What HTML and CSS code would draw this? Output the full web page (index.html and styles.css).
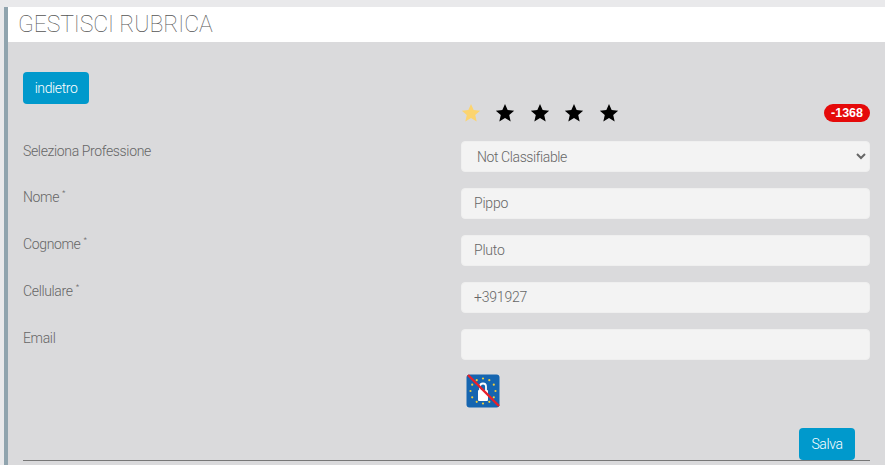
FILE: index.html
```html
<!DOCTYPE html>
<html lang="it">
<head>
<meta charset="utf-8">
<title>Gestisci Rubrica</title>
<link rel="stylesheet" href="styles.css">
</head>
<body>
<div class="panel">
  <header class="title-bar"><h1 class="title">GESTISCI RUBRICA</h1></header>
  <main class="content">
    <div class="back-row"><button class="btn back-btn" type="button">indietro</button></div>
    <div class="rating-row">
      <div class="stars">
        <svg class="star star-on" viewBox="0 0 24 24"><path d="M12 2.200l2.900 6.600 7.100.7-5.400 4.700 1.600 7-6.200-3.700-6.200 3.700 1.600-7L2 9.500l7.100-.7z"/></svg>
        <svg class="star" viewBox="0 0 24 24"><path d="M12 2.200l2.900 6.600 7.100.7-5.400 4.700 1.600 7-6.200-3.700-6.200 3.700 1.600-7L2 9.500l7.100-.7z"/></svg>
        <svg class="star" viewBox="0 0 24 24"><path d="M12 2.200l2.900 6.600 7.100.7-5.400 4.700 1.600 7-6.200-3.700-6.200 3.700 1.600-7L2 9.500l7.100-.7z"/></svg>
        <svg class="star" viewBox="0 0 24 24"><path d="M12 2.200l2.900 6.600 7.100.7-5.400 4.700 1.600 7-6.200-3.700-6.200 3.700 1.600-7L2 9.500l7.100-.7z"/></svg>
        <svg class="star" viewBox="0 0 24 24"><path d="M12 2.200l2.900 6.600 7.100.7-5.400 4.700 1.600 7-6.200-3.700-6.200 3.700 1.600-7L2 9.500l7.100-.7z"/></svg>
      </div>
      <span class="badge">-1368</span>
    </div>
    <form class="form">
      <label class="label label-first">Seleziona Professione</label>
      <select class="field select"><option>Not Classifiable</option></select>
      <label class="label">Nome<sup class="req">*</sup></label>
      <input class="field" type="text" value="Pippo">
      <label class="label">Cognome<sup class="req">*</sup></label>
      <input class="field" type="text" value="Pluto">
      <label class="label">Cellulare<sup class="req">*</sup></label>
      <input class="field" type="text" value="+391927">
      <label class="label">Email</label>
      <input class="field" type="text" value="">
      <span></span>
      <svg class="privacy" viewBox="0 0 34 34">
        <rect x="0.500" y="0.500" width="33" height="33" rx="3" fill="#1565b0"/>
        <g fill="#f2cf3c">
          <circle cx="17" cy="4.500" r="1.100"/><circle cx="23.300" cy="6.200" r="1.100"/><circle cx="27.800" cy="10.700" r="1.100"/>
          <circle cx="29.500" cy="17" r="1.100"/><circle cx="27.800" cy="23.300" r="1.100"/><circle cx="23.300" cy="27.800" r="1.100"/>
          <circle cx="17" cy="29.500" r="1.100"/><circle cx="10.700" cy="27.800" r="1.100"/><circle cx="6.200" cy="23.300" r="1.100"/>
          <circle cx="4.500" cy="17" r="1.100"/><circle cx="6.200" cy="10.700" r="1.100"/><circle cx="10.700" cy="6.200" r="1.100"/>
        </g>
        <path d="M14 16v-3.500a3 3 0 0 1 6 0V16" fill="none" stroke="#fff" stroke-width="1.800"/>
        <rect x="12" y="16" width="10" height="11" rx="1" fill="#fff"/>
        <path d="M2 1L33 32" stroke="#e8202a" stroke-width="2.400"/>
      </svg>
    </form>
    <div class="actions"><button class="btn save-btn" type="button">Salva</button></div>
    <hr class="rule">
  </main>
</div>
</body>
</html>
```
FILE: styles.css
```css
* { box-sizing: border-box; }
html, body { margin: 0; height: 100%; overflow: hidden; }
body {
  background: #e9e9eb;
  padding: 7px 0 0 4px;
  font-family: "Roboto", "Liberation Sans", sans-serif;
  font-weight: 300;
  color: #666;
}
.panel {
  border-left: 4px solid #90a4ae;
  background: #dadadc;
  height: 458px;
  display: flex;
  flex-direction: column;
}
.title-bar { background: #fff; height: 35px; padding: 0 10px; flex: none; }
.title { margin: 0; font-size: 23px; font-weight: 100; line-height: 36px; color: #555; letter-spacing: -0.1px; }
.content { padding: 30px 15px 0 15px; flex: 1; }
.back-row { height: 32px; }
.btn {
  height: 32px;
  background: #0099cc;
  color: #fff;
  border: 0;
  border-radius: 4px;
  font: 300 14px "Roboto", "Liberation Sans", sans-serif;
  letter-spacing: -0.4px;
  padding: 0;
}
.back-btn { width: 66px; }
.save-btn { width: 56px; }
.rating-row {
  margin-left: 438px;
  height: 37px;
  display: flex;
  justify-content: space-between;
  align-items: flex-start;
}
.stars { display: flex; gap: 12.500px; margin: -2px 0 0 -1.500px; }
.star { width: 22px; height: 22px; fill: #000; }
.star-on { fill: #fcd46f; }
.badge {
  background: #e50a0a;
  color: #fff;
  font: 700 12.500px "Liberation Sans", sans-serif;
  line-height: 18px;
  height: 18px;
  border-radius: 9px;
  padding: 0 7px;
}
.form {
  display: grid;
  grid-template-columns: 438px 409px;
  grid-auto-rows: 31px;
  row-gap: 16px;
}
.label { font-size: 14px; line-height: 18px; color: #666; letter-spacing: -0.35px; }
.label-first { line-height: 20px; }
.req { font-size: 8px; line-height: 0; margin-left: 3px; vertical-align: 7px; }
.field {
  width: 100%;
  height: 31px;
  background: #f3f3f3;
  border: 1px solid #efefef;
  border-radius: 4px;
  padding: 0 12px 2px;
  font: 300 14px "Roboto", "Liberation Sans", sans-serif;
  letter-spacing: -0.2px;
  color: #666;
  outline: 0;
}
.select { padding: 0 0 0 11px; letter-spacing: -0.4px; }
.privacy { width: 34px; height: 34px; margin: -2px 0 0 5px; }
.actions { display: flex; justify-content: flex-end; margin-top: 21px; padding-right: 15px; }
.rule { margin: 0; border: 0; border-top: 1px solid #777; }
```
